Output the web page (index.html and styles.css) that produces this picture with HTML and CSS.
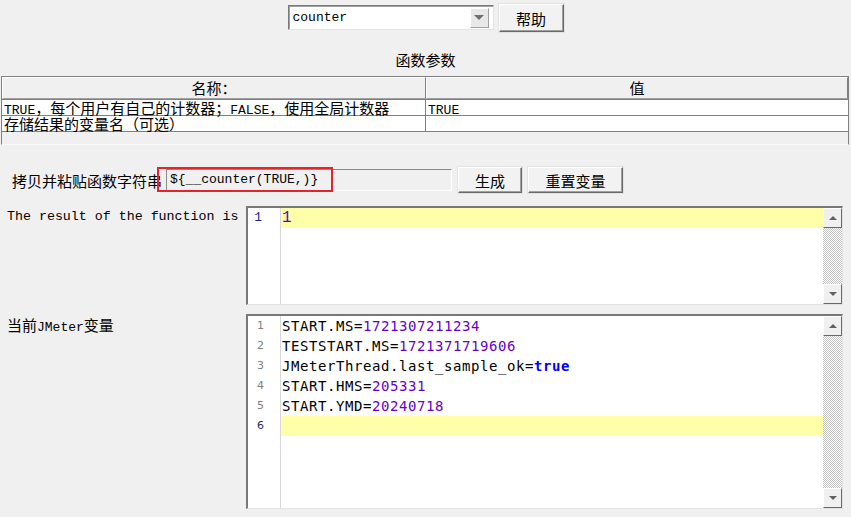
FILE: index.html
```html
<!DOCTYPE html>
<html lang="zh-CN">
<head>
    <meta charset="UTF-8">
    <title>函数助手</title>
    <link rel="stylesheet" href="styles.css">
</head>
<body>
    <!-- 函数选择 -->
    <div class="top-bar">
        <div class="combo">
            <span class="combo-text">counter</span>
            <span class="combo-arrow"><i class="tri down"></i></span>
        </div>
        <button class="btn help-btn">帮助</button>
    </div>

    <div class="params-title">函数参数</div>

    <!-- 参数表 -->
    <div class="params">
        <div class="params-row head">
            <div class="cell">名称：</div>
            <div class="cell">值</div>
        </div>
        <div class="params-row">
            <div class="cell"><span class="en">TRUE</span>，每个用户有自己的计数器；<span class="en">FALSE</span>，使用全局计数器</div>
            <div class="cell"><span class="en">TRUE</span></div>
        </div>
        <div class="params-row">
            <div class="cell">存储结果的变量名（可选）</div>
            <div class="cell"></div>
        </div>
    </div>

    <div class="copy-row">
        <span class="copy-label">拷贝并粘贴函数字符串</span>
        <div class="func-field">${__counter(TRUE,)}</div>
        <button class="btn gen-btn">生成</button>
        <button class="btn reset-btn">重置变量</button>
        <div class="mark"></div>
    </div>

    <!-- 结果 -->
    <div class="out-row">
        <div class="out-label en">The result of the function is</div>
        <div class="editor result">
            <div class="gutter">
                <div class="ln current">1</div>
            </div>
            <div class="code">
                <div class="line current"><span class="num">1</span></div>
            </div>
            <div class="scrollbar">
                <div class="sb-btn"><i class="tri up"></i></div>
                <div class="sb-track"></div>
                <div class="sb-btn"><i class="tri down"></i></div>
            </div>
        </div>
    </div>

    <!-- 变量 -->
    <div class="out-row vars">
        <div class="out-label">当前<span class="en">JMeter</span>变量</div>
        <div class="editor">
            <div class="gutter">
                <div class="ln">1</div>
                <div class="ln">2</div>
                <div class="ln">3</div>
                <div class="ln">4</div>
                <div class="ln">5</div>
                <div class="ln current">6</div>
            </div>
            <div class="code">
                <div class="line">START.MS=<span class="num">1721307211234</span></div>
                <div class="line">TESTSTART.MS=<span class="num">1721371719606</span></div>
                <div class="line">JMeterThread.last_sample_ok=<span class="bool">true</span></div>
                <div class="line">START.HMS=<span class="num">205331</span></div>
                <div class="line">START.YMD=<span class="num">20240718</span></div>
                <div class="line current"></div>
            </div>
            <div class="scrollbar">
                <div class="sb-btn"><i class="tri up"></i></div>
                <div class="sb-track"></div>
                <div class="sb-btn"><i class="tri down"></i></div>
            </div>
        </div>
    </div>
</body>
</html>
```

FILE: styles.css
```css
* {
    margin: 0;
    padding: 0;
    box-sizing: border-box;
}

body {
    width: 851px;
    height: 517px;
    overflow: hidden;
    background-color: #f0f0f0;
    color: #000;
    font-family: "Noto Sans CJK SC", sans-serif;
    font-size: 15px;
}

.en {
    font-family: "Liberation Mono", "Noto Sans CJK SC", monospace;
    font-size: 13px;
}

/* 按钮 */
.btn {
    font-family: "Noto Sans CJK SC", sans-serif;
    font-size: 15px;
    line-height: 1;
    color: #000;
    background-color: #f2f2f2;
    border: 1px solid;
    border-color: #fff #696969 #696969 #fff;
    box-shadow: inset -1px -1px #a0a0a0, 0 0 0 1px #e3e3e3;
}

.tri {
    display: block;
    width: 0;
    height: 0;
    border-left: 4px solid transparent;
    border-right: 4px solid transparent;
}

.tri.up {
    border-bottom: 4px solid #606060;
}

.tri.down {
    border-top: 4px solid #606060;
}

/* 顶部 */
.top-bar {
    display: flex;
    justify-content: center;
    align-items: flex-start;
    gap: 5px;
    height: 32px;
    padding-top: 4px;
}

.combo {
    display: flex;
    align-items: center;
    width: 206px;
    height: 25px;
    margin-top: 1px;
    padding-left: 4px;
    background-color: #fff;
    border: 1px solid;
    border-color: #7a7a7a #e3e3e3 #e3e3e3 #7a7a7a;
    box-shadow: inset 1px 1px #a0a0a0;
}

.combo-text {
    flex: 1;
    font-family: "Liberation Mono", monospace;
    font-size: 13px;
}

.combo-arrow {
    display: flex;
    align-items: center;
    justify-content: center;
    width: 19px;
    height: 20px;
    margin-right: 4px;
    background-color: #e8e8e8;
    border: 1px solid;
    border-color: #fff #a0a0a0 #a0a0a0 #fff;
}

.combo-arrow .tri {
    border-left-width: 5px;
    border-right-width: 5px;
    border-top: 5px solid #707070;
}

.help-btn {
    width: 65px;
    height: 28px;
}

.params-title {
    margin-top: 18px;
    text-align: center;
    line-height: 20px;
}

/* 参数表 */
.params {
    height: 69px;
    margin: 6px 2px 0 1px;
    border: 1px solid #808080;
    border-bottom-color: #fafafa;
}

.params-row {
    display: grid;
    grid-template-columns: 424px 1fr;
    height: 16px;
    line-height: 15px;
    background-color: #fff;
    border-bottom: 1px solid #808080;
}

.params-row .cell {
    padding-left: 2px;
    white-space: nowrap;
    border-right: 1px solid #808080;
}

.params-row .cell:last-child {
    border-right: 0;
}

.params-row.head {
    height: 23px;
    background-color: #f0f0f0;
}

.head .cell {
    padding: 0;
    line-height: 20px;
    text-align: center;
    border: 1px solid;
    border-color: #fff #808080 #a0a0a0 #fff;
}

.head .cell:last-child {
    border-right: 1px solid #808080;
}

/* 函数字符串 */
.copy-row {
    position: relative;
    display: flex;
    align-items: center;
    height: 26px;
    margin-top: 22px;
    padding-left: 12px;
}

.copy-label {
    width: 154px;
    white-space: nowrap;
}

.func-field {
    width: 286px;
    height: 22px;
    padding-left: 3px;
    line-height: 20px;
    font-family: "Liberation Mono", monospace;
    font-size: 13px;
    border: 1px solid;
    border-color: #8a8a8a #fff #fff #8a8a8a;
}

.gen-btn {
    width: 64px;
    height: 26px;
    margin-left: 6px;
}

.reset-btn {
    width: 95px;
    height: 26px;
    margin-left: 6px;
}

.mark {
    position: absolute;
    left: 157px;
    top: 0;
    width: 176px;
    height: 25px;
    border: 2px solid #e3252b;
}

/* 编辑区 */
.out-row {
    display: flex;
    margin-top: 13px;
    padding-left: 7px;
}

.out-row.vars {
    margin-top: 9px;
}

.out-label {
    width: 239px;
    padding-top: 1px;
    line-height: 20px;
    white-space: nowrap;
}

.out-label.en {
    font-size: 13.3px;
}

.editor {
    display: flex;
    width: 597px;
    height: 99px;
    background-color: #fff;
    border: 2px solid #787878;
    border-right: 1px solid #e3e3e3;
    border-bottom: 1px solid #e3e3e3;
}

.vars .editor {
    height: 195px;
}

.gutter {
    width: 33px;
    padding-right: 16px;
    text-align: right;
    border-right: 1px solid #d8d8d8;
}

.ln {
    height: 20px;
    line-height: 20px;
    font-family: "DejaVu Sans", sans-serif;
    font-size: 11px;
    color: #808080;
}

.ln.current {
    color: #1e2a6e;
}

.result .gutter {
    padding-right: 18px;
}

.result .ln {
    font-family: "Liberation Mono", monospace;
    font-size: 13px;
    color: #1e2a8a;
}

.code {
    flex: 1;
}

.line {
    height: 20px;
    padding-left: 1px;
    line-height: 20px;
    white-space: pre;
    font-family: "DejaVu Sans Mono", monospace;
    font-size: 14px;
    letter-spacing: 0.57px;
}

.result .line {
    font-family: "Liberation Mono", monospace;
    font-size: 16px;
    letter-spacing: 0;
}

.line.current {
    background-color: #ffffaa;
}

.num {
    color: #6400c8;
}

.bool {
    color: #0000ff;
    font-weight: bold;
}

.scrollbar {
    display: flex;
    flex-direction: column;
    width: 19px;
    background: repeating-conic-gradient(#c4c4c4 0 25%, #fff 0 50%) 0 0 / 2px 2px;
}

.sb-btn {
    display: flex;
    align-items: center;
    justify-content: center;
    height: 20px;
    background-color: #f0f0f0;
    border: 1px solid;
    border-color: #fff #696969 #696969 #fff;
}

.sb-track {
    flex: 1;
}
```
